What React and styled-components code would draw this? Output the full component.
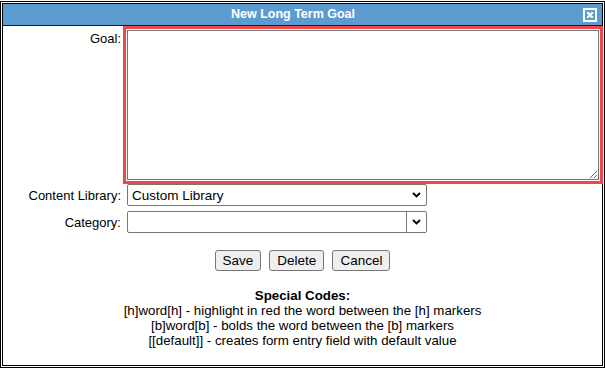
import React from "react";
import styled, { createGlobalStyle } from "styled-components";

const GlobalStyle = createGlobalStyle`
    html, body {
        margin: 0;
        padding: 0;
        background: #ffffff;
    }
    body {
        font-family: "Liberation Sans", Arial, sans-serif;
        font-size: 13px;
        color: #000;
    }
`;

const Page = styled.div`
    width: 605px;
    height: 369px;
    padding-top: 1px;
    box-sizing: border-box;
    overflow: hidden;
`;

const Dialog = styled.div`
    width: 605px;
    height: 367px;
    box-sizing: border-box;
    border: 1px solid #000;
    padding: 1px;
    background: #fff;
`;

const Inner = styled.div`
    height: 100%;
    box-sizing: border-box;
    border: 1px solid #000;
    display: flex;
    flex-direction: column;
`;

const TitleBar = styled.div`
    height: 21px;
    background: #5c9bd0;
    border-bottom: 1px solid #1a1a1a;
    display: flex;
    align-items: center;
`;

const Title = styled.div`
    flex: 1;
    text-align: center;
    color: #fff;
    font-weight: bold;
    font-size: 12.5px;
    line-height: 21px;
`;

const CloseButton = styled.button`
    width: 14px;
    height: 14px;
    padding: 0;
    margin: 0 5px 0 0;
    border: 0;
    background: transparent;
    display: flex;
    cursor: pointer;
`;

const Body = styled.div`
    display: flex;
    flex-direction: column;
    padding-top: 4px;
`;

const Row = styled.div`
    display: flex;
    align-items: ${(p) => (p.$top ? "flex-start" : "center")};
    gap: 6px;
    margin-top: ${(p) => p.$gap || 0}px;
`;

const Label = styled.label`
    width: 118px;
    flex-shrink: 0;
    text-align: right;
    line-height: 15px;
    white-space: nowrap;
    padding-top: ${(p) => (p.$top ? 1 : 0)}px;
`;

const GoalInput = styled.textarea`
    width: 472px;
    height: 150px;
    box-sizing: border-box;
    border: 1px solid #767676;
    box-shadow: 0 0 0 1px #fff, 0 0 0 4px #f2474a;
    outline: none;
    resize: both;
    font-family: "Liberation Sans", Arial, sans-serif;
    font-size: 13px;
    margin: 0;
`;

const SelectWrap = styled.div`
    position: relative;
    width: 300px;
    height: 22px;
`;

const Select = styled.select`
    appearance: none;
    width: 100%;
    height: 100%;
    box-sizing: border-box;
    border: 1px solid #767676;
    border-radius: 2px;
    background: #fff;
    padding: 0 0 0 4px;
    font-family: "Liberation Sans", Arial, sans-serif;
    font-size: 13.5px;
    color: #000;
    margin: 0;
`;

const Chevron = styled.div`
    position: absolute;
    right: 6px;
    top: 8px;
    display: flex;
    pointer-events: none;
`;

const Combo = styled.div`
    width: 300px;
    height: 22px;
    box-sizing: border-box;
    border: 1px solid #767676;
    border-radius: 2px;
    display: flex;
    background: #fff;
`;

const ComboInput = styled.input`
    flex: 1;
    min-width: 0;
    border: 0;
    padding: 0 4px;
    font-family: "Liberation Sans", Arial, sans-serif;
    font-size: 13px;
    outline: none;
    background: transparent;
`;

const ComboArrow = styled.div`
    width: 19px;
    border-left: 1px solid #767676;
    display: flex;
    align-items: center;
    justify-content: center;
`;

const Buttons = styled.div`
    display: flex;
    justify-content: center;
    gap: 8px;
    margin-top: 17px;
`;

const Button = styled.button`
    height: 21px;
    padding: 0 7px;
    border: 1px solid #767676;
    border-radius: 3px;
    background: #efefef;
    font-family: "Liberation Sans", Arial, sans-serif;
    font-size: 13.5px;
    color: #000;
    line-height: 19px;
    margin: 0;
`;

const Codes = styled.div`
    margin-top: 17px;
    text-align: center;
    line-height: 15px;
    font-size: 13.3px;
`;

const CodesTitle = styled.div`
    font-weight: bold;
`;

const ChevronDown = () => (
    <svg width="9" height="6" viewBox="0 0 9 6">
        <path d="M1 1 L4.5 4.5 L8 1" fill="none" stroke="#000" strokeWidth="1.9" />
    </svg>
);

const App = () => {
    return (
        <Page>
            <GlobalStyle />
            <Dialog>
                <Inner>
                    <TitleBar>
                        <Title>New Long Term Goal</Title>
                        <CloseButton type="button" aria-label="Close">
                            <svg width="14" height="14" viewBox="0 0 14 14">
                                <rect x="1" y="1" width="12" height="12" fill="none" stroke="#fff" strokeWidth="2" />
                                <path d="M4.2 4.2 L9.8 9.8 M9.8 4.2 L4.2 9.8" stroke="#fff" strokeWidth="2.2" />
                            </svg>
                        </CloseButton>
                    </TitleBar>
                    <Body>
                        <Row $top>
                            <Label $top>Goal:</Label>
                            <GoalInput />
                        </Row>
                        <Row $gap={4}>
                            <Label>Content Library:</Label>
                            <SelectWrap>
                                <Select defaultValue="custom">
                                    <option value="custom">Custom Library</option>
                                </Select>
                                <Chevron>
                                    <ChevronDown />
                                </Chevron>
                            </SelectWrap>
                        </Row>
                        <Row $gap={5}>
                            <Label>Category:</Label>
                            <Combo>
                                <ComboInput />
                                <ComboArrow>
                                    <ChevronDown />
                                </ComboArrow>
                            </Combo>
                        </Row>
                        <Buttons>
                            <Button type="button">Save</Button>
                            <Button type="button">Delete</Button>
                            <Button type="button">Cancel</Button>
                        </Buttons>
                        <Codes>
                            <CodesTitle>Special Codes:</CodesTitle>
                            <div>[h]word[h] - highlight in red the word between the [h] markers</div>
                            <div>[b]word[b] - bolds the word between the [b] markers</div>
                            <div>[[default]] - creates form entry field with default value</div>
                        </Codes>
                    </Body>
                </Inner>
            </Dialog>
        </Page>
    );
};

export default App;
